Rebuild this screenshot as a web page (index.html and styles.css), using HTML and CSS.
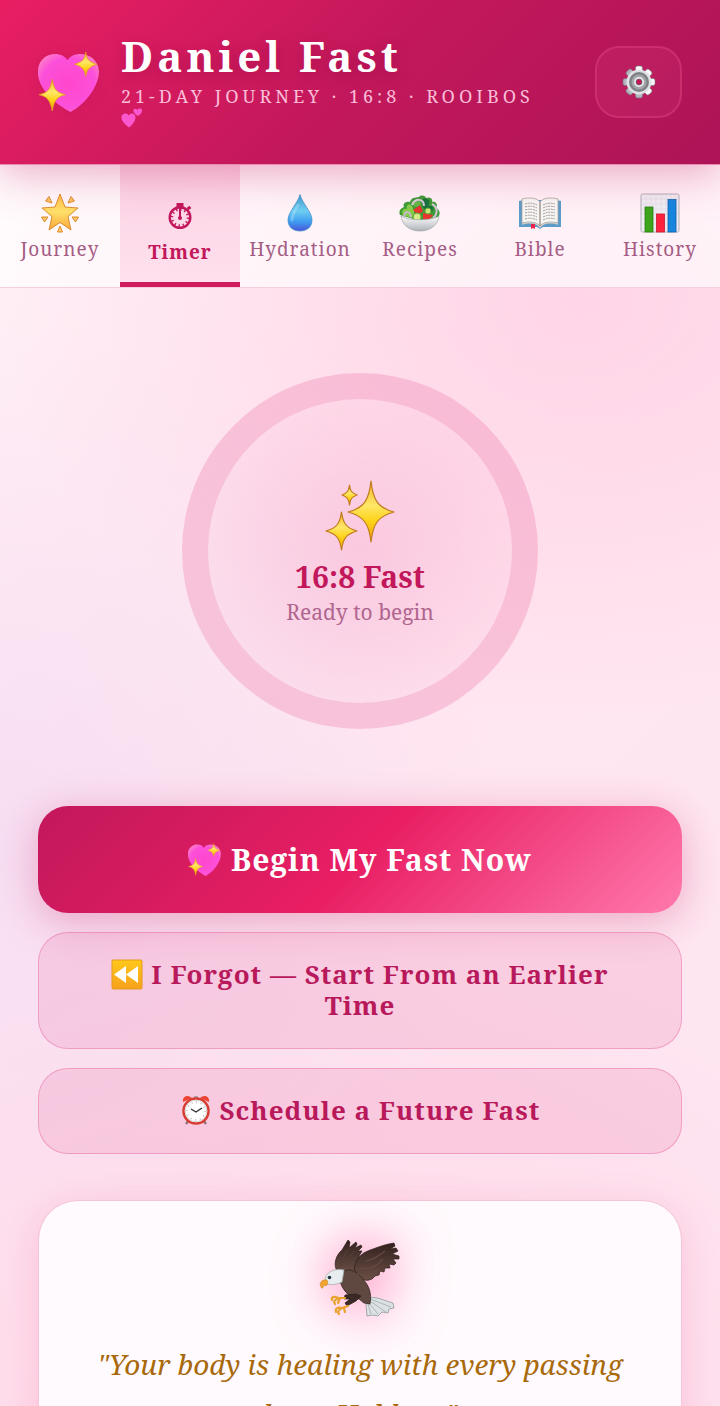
FILE: index.html
```html
<!DOCTYPE html>
<html lang="en">
  <head>
    <meta charset="UTF-8" />
    <meta name="viewport" content="width=device-width, initial-scale=1.0" />
    <title>Daniel Fast</title>
    <link rel="stylesheet" href="styles.css">
  </head>
  <body>
    <!-- shared gradients and the sparkling heart -->
    <svg class="defs" width="0" height="0" aria-hidden="true">
      <defs>
        <radialGradient id="heartFill" cx="0.5" cy="0.5" r="0.62">
          <stop offset="0" stop-color="#ff46cc" />
          <stop offset="0.7" stop-color="#fc50da" />
          <stop offset="1" stop-color="#ff86c4" />
        </radialGradient>
        <linearGradient id="gold" x1="0" y1="0" x2="0" y2="1">
          <stop offset="0" stop-color="#f3b52a" />
          <stop offset="0.4" stop-color="#ffe768" />
          <stop offset="0.65" stop-color="#fdd31a" />
          <stop offset="1" stop-color="#ee9f0c" />
        </linearGradient>
        <linearGradient id="starFill" x1="0" y1="0" x2="0" y2="1">
          <stop offset="0" stop-color="#ffc04a" />
          <stop offset="0.5" stop-color="#ffe26a" />
          <stop offset="1" stop-color="#fba63a" />
        </linearGradient>
        <linearGradient id="dropFill" x1="0" y1="0" x2="0" y2="1">
          <stop offset="0" stop-color="#3a9fd0" />
          <stop offset="0.45" stop-color="#6fd0f4" />
          <stop offset="0.75" stop-color="#3f9cf0" />
          <stop offset="1" stop-color="#4a55d8" />
        </linearGradient>
        <linearGradient id="wingFill" x1="0" y1="0" x2="0" y2="1">
          <stop offset="0" stop-color="#33211f" />
          <stop offset="1" stop-color="#6b4f45" />
        </linearGradient>
        <linearGradient id="silver" x1="0" y1="0" x2="0" y2="1">
          <stop offset="0" stop-color="#ffffff" />
          <stop offset="1" stop-color="#aeb2b8" />
        </linearGradient>
        <linearGradient id="rewindFill" x1="0" y1="0" x2="0" y2="1">
          <stop offset="0" stop-color="#ffc81a" />
          <stop offset="1" stop-color="#f7a11c" />
        </linearGradient>
      </defs>
      <symbol id="heart" viewBox="3 0 62 62">
        <path d="M32 9 C26 -1 5 1 3 18 C1 36 20 52 35 60 C47 54 62 38 63 21 C63 2 39 -2 32 9Z" fill="url(#heartFill)" />
        <path d="M50 1 C51 9 54 11 61 13 C54 15 51 18 50 25 C49 18 46 15 39 13 C46 11 49 9 50 1Z" fill="url(#gold)" stroke="#e39a22" stroke-width="0.800" />
        <path d="M17 28 C19 39 22 41 30 43 C22 45 19 48 17 59 C15 48 12 45 4 43 C12 41 15 39 17 28Z" fill="url(#gold)" stroke="#e39a22" stroke-width="0.800" />
      </symbol>
    </svg>

    <header class="header">
      <svg class="logo" aria-hidden="true"><use href="#heart" /></svg>
      <div class="brand">
        <h1>Daniel Fast</h1>
        <p>
          21-Day Journey · 16:8 · Rooibos
          <svg class="mini-hearts" viewBox="0 0 22 20" aria-hidden="true">
            <path d="M8 7.500 C6 4 0 5 0.500 10 C1 14 5 17 8 19.500 C11 17 14 14 14.500 10 C15 5 9 4 8 7.500Z" fill="#fb58cf" />
            <path d="M16.500 2 C15 0 12 0.500 12.500 3 C13 5.500 15 6.500 17 8 C19 6.500 21 5 21 2.500 C21 0 17.500 0 16.500 2Z" fill="#fb58cf" />
          </svg>
        </p>
      </div>
      <button class="settings" aria-label="Settings">
        <svg viewBox="0 0 34 34" aria-hidden="true">
          <g fill="url(#silver)" stroke="#74777c" stroke-width="0.600">
            <rect x="13.500" y="1" width="7" height="32" rx="2" />
            <rect x="13.500" y="1" width="7" height="32" rx="2" transform="rotate(45 17 17)" />
            <rect x="13.500" y="1" width="7" height="32" rx="2" transform="rotate(90 17 17)" />
            <rect x="13.500" y="1" width="7" height="32" rx="2" transform="rotate(135 17 17)" />
          </g>
          <circle cx="17" cy="17" r="12.500" fill="#dfe1e4" />
          <circle cx="17" cy="17" r="10" fill="#7e8287" />
          <circle cx="17" cy="17" r="7.500" fill="#a3a6aa" />
          <circle cx="17" cy="17" r="5" fill="#eceef0" />
          <circle cx="17" cy="17" r="3" fill="#c2185b" stroke="#666" stroke-width="0.800" />
        </svg>
      </button>
    </header>

    <nav class="tabs">
      <a class="tab" href="#journey">
        <svg viewBox="0 0 40 40" aria-hidden="true">
          <g stroke="#d98224" stroke-width="0.900" stroke-linejoin="round">
            <path d="M20 1 L25 14 L38 15 L28 23.500 L31 37 L20 29.500 L9 37 L12 23.500 L2 15 L15 14Z" fill="url(#starFill)" />
            <path d="M9 3.500 L12 10 L5.500 8Z M31 3.500 L28 10 L34.500 8Z M1.500 24 L8 24 L4.500 29Z M38.500 24 L32 24 L35.500 29Z M20 33 L22.500 39 L17.500 39Z" fill="#ffc766" />
          </g>
        </svg>
        <span>Journey</span>
      </a>
      <a class="tab active" href="#timer">
        <svg class="small" viewBox="0 0 26 30" aria-hidden="true">
          <rect x="9.500" y="2" width="7" height="4" fill="#c2185b" />
          <path d="M20.500 8 L23.500 6" stroke="#c2185b" stroke-width="3" />
          <circle cx="13" cy="16.500" r="10.300" fill="none" stroke="#c2185b" stroke-width="2.400" />
          <circle cx="13" cy="16.500" r="8" fill="none" stroke="#c2185b" stroke-width="2.400" stroke-dasharray="1.400 2.789" />
          <path d="M13 4 V16.500" stroke="#c2185b" stroke-width="2" />
          <circle cx="13" cy="17" r="2" fill="#c2185b" />
        </svg>
        <span>Timer</span>
      </a>
      <a class="tab" href="#hydration">
        <svg viewBox="0 0 40 40" aria-hidden="true">
          <path d="M20 1.500 C22 10 32 19 32 27 C32 34 27 38 20 38 C13 38 8 34 8 27 C8 19 18 10 20 1.500Z" fill="url(#dropFill)" stroke="#3388c8" stroke-width="0.700" />
          <path d="M18 12 C15 18 12 22 12 27" fill="none" stroke="#b5ecff" stroke-width="2.500" stroke-linecap="round" opacity="0.400" />
        </svg>
        <span>Hydration</span>
      </a>
      <a class="tab" href="#recipes">
        <svg class="wide" viewBox="0 0 42 40" aria-hidden="true">
          <path d="M1 22 C-1 17 3 15 5 14 C3 9 9 8 11 9 C13 3 18 5 20 4 C22 1 27 3 27 5 C32 3 34 7 33 9 C38 8 39 13 37 15 C42 17 41 22 39 24 L21 28Z" fill="#3f9d38" />
          <path d="M4 22 C1 17 7 14 8 17 C6 9 14 11 14 16 C17 17 14 22 13 25Z" fill="#86cf4a" />
          <path d="M23 7 C28 3 33 8 29 13 C35 11 36 18 31 20 L24 15Z" fill="#17743c" />
          <path d="M13 9 C17 4 24 8 21 13 C17 15 13 13 13 9Z" fill="#62b948" />
          <path d="M13 12 C16 5 25 5 25 13" fill="none" stroke="#d8cbdc" stroke-width="2" />
          <path d="M33 11 C39 14 39 21 34 25" fill="none" stroke="#d5c7dc" stroke-width="2" />
          <path d="M5 24 C6 17 11 18 12 24" fill="none" stroke="#c9bad0" stroke-width="2" />
          <path d="M14 17 L21 12 L24 18 L19 22Z M24 20 L34 22 L30 27 L24 26Z" fill="#e8352e" />
          <circle cx="18" cy="24" r="4" fill="#d5ec8b" stroke="#68a838" />
          <circle cx="29" cy="18" r="3" fill="#ccea7b" stroke="#68a838" />
          <path d="M2 23 C7 28 34 28 40 23 C39 31 33 38 21 38 C9 38 3 31 2 23Z" fill="url(#silver)" stroke="#9b9da0" stroke-width="0.600" />
        </svg>
        <span>Recipes</span>
      </a>
      <a class="tab" href="#bible">
        <svg class="wide" viewBox="0 0 42 40" aria-hidden="true">
          <path d="M0 8 L5 7 H37 L42 8 V34 H24 L21 36 L18 34 H0Z" fill="#5b9cc9" />
          <path d="M3 6 C11 4 18 5 21 9 C24 5 31 4 39 6 V30 C31 28 24 29 21 33 C18 29 11 28 3 30Z" fill="#f8f7f5" stroke="#a9a39d" stroke-width="0.800" />
          <path d="M3 31 C11 29 18 30 21 34 C24 30 31 29 39 31" fill="none" stroke="#cfc8c3" stroke-width="1.500" />
          <path d="M21 9 V33" stroke="#8d8178" stroke-width="1.200" />
          <path d="M6 11 Q12 9 18 12 M6 14 Q12 12 18 15 M6 17 Q12 15 18 18 M6 20 Q12 18 18 21 M6 23 Q12 21 18 24 M6 26 Q12 24 18 27 M24 12 Q30 9 36 11 M24 15 Q30 12 36 14 M24 18 Q30 15 36 17 M24 21 Q30 18 36 20 M24 24 Q30 21 36 23 M24 27 Q30 24 36 26" fill="none" stroke="#99938e" stroke-width="0.900" stroke-dasharray="2 0.700" />
          <path d="M12 31 H16 V36 L14 35 L12 36Z" fill="#ed234d" />
        </svg>
        <span>Bible</span>
      </a>
      <a class="tab" href="#history">
        <svg viewBox="0 0 40 40" aria-hidden="true">
          <rect x="1" y="1" width="38" height="38" rx="1.500" fill="#f0edf4" stroke="#b0adb6" />
          <path d="M6 2 V38 M11 2 V38 M16 2 V38 M21 2 V38 M26 2 V38 M31 2 V38 M36 2 V38 M2 6 H38 M2 11 H38 M2 16 H38 M2 21 H38 M2 26 H38 M2 31 H38 M2 36 H38" stroke="#dcd9e2" stroke-width="0.500" />
          <rect x="5" y="14" width="8" height="25" fill="#3da51c" stroke="#2a7d12" stroke-width="0.800" />
          <rect x="16.500" y="21" width="8" height="18" fill="#ff2340" stroke="#ce1733" stroke-width="0.800" />
          <rect x="28" y="6.500" width="8" height="32.500" fill="#1686df" stroke="#0d60ae" stroke-width="0.800" />
        </svg>
        <span>History</span>
      </a>
    </nav>

    <main class="content">
      <section class="ring">
        <svg class="sparkles" viewBox="0 0 72 72" aria-hidden="true">
          <g fill="url(#gold)" stroke="#c07a1c" stroke-width="1.200" stroke-linejoin="round">
            <path d="M47 2 C49 21 54 29 70 33 C54 37 49 45 47 63 C45 45 40 37 24 33 C40 29 45 21 47 2Z" />
            <path d="M17.500 33 C19 44 22 49 33 52 C22 55 19 60 17.500 71 C16 60 13 55 2 52 C13 49 16 44 17.500 33Z" />
            <path d="M25.500 6 C26 12 28 14 33 16 C28 18 26 20 25.500 26 C25 20 23 18 18 16 C23 14 25 12 25.500 6Z" />
          </g>
        </svg>
        <h2>16:8 Fast</h2>
        <p>Ready to begin</p>
      </section>

      <div class="actions">
        <button class="btn btn-main">
          <svg class="heart-icon" aria-hidden="true"><use href="#heart" /></svg>
          Begin My Fast Now
        </button>
        <button class="btn btn-soft">
          <svg viewBox="0 0 32 32" aria-hidden="true">
            <rect x="1" y="2" width="30" height="29" rx="1" fill="url(#rewindFill)" stroke="#e5981e" />
            <path d="M3 16.500 L15 8 V25Z M15 16.500 L27 8 V25Z" fill="#fff" />
          </svg>
          I Forgot — Start From an Earlier Time
        </button>
        <button class="btn btn-soft">
          <svg viewBox="0 0 32 32" aria-hidden="true">
            <path d="M9 26 L6 30 M23 26 L26 30" stroke="#927477" stroke-width="2.500" />
            <path d="M3 8 C2 2 8 0 12 4Z M29 8 C30 2 24 0 20 4Z" fill="#ef4434" />
            <path d="M14 2 H18 V5 H14Z" fill="#a5a5a9" />
            <circle cx="16" cy="17" r="12.500" fill="#fff" stroke="#d83b30" stroke-width="2.500" />
            <circle cx="16" cy="17" r="10.800" fill="#fff" stroke="#c9c9c9" stroke-width="0.800" />
            <circle cx="16" cy="17" r="9" fill="none" stroke="#8a8a8a" stroke-width="1.300" stroke-dasharray="0.700 4.012" />
            <path d="M11 15 L16 18 L22 14" fill="none" stroke="#333" stroke-width="1.400" />
          </svg>
          Schedule a Future Fast
        </button>
      </div>

      <section class="card">
        <svg class="eagle" viewBox="0 0 80 80" aria-hidden="true">
          <path d="M50 59 C56 57 65 62 73 64 L74 69 L69 70 L68 74 L62 73 L58 77 L53 76 L47 77 L46 66Z" fill="#dce2e4" stroke="#92999d" stroke-width="0.800" />
          <path d="M50 60 L71 68 M50 62 L66 73 M49 64 L58 75 M48 65 L51 75" stroke="#a8b0b3" stroke-width="0.900" />
          <g stroke="#2a1c1a" stroke-width="0.700" stroke-linejoin="round">
            <path d="M17 32 C13 25 16 16 22 11 L28 1 L30 3 L29 9 L36 3 L37 5 L35 9 L41 6 L42 8 L38 12 L42 12 L39 17 L40 35 L28 35Z" fill="url(#wingFill)" />
            <path d="M34 30 C37 16 44 13 53 10 C61 7 67 5 74 4 L75 7 L70 10 L76 9 L78 12 L72 15 L79 17 L79 20 L73 20 L76 24 L74 26 L69 25 L70 29 L65 29 L64 33 L60 32 L59 36 L55 37 L52 40 C47 42 44 42 40 38Z" fill="url(#wingFill)" />
            <path d="M21 35 C28 27 36 32 43 40 C49 47 52 54 50 65 L44 64 L39 60 C29 60 20 48 20 40Z" fill="#5f483f" />
            <path d="M41 57 L36 62 L27 67 L25 64 L30 60 L24 60 L25 56 L36 55Z" fill="#3b2925" />
          </g>
          <path d="M37 34 C45 40 54 35 58 30 M41 29 C50 31 58 26 63 20 M45 22 C52 22 58 17 65 12" fill="none" stroke="#644a40" stroke-width="1.200" />
          <path d="M20 28 C22 20 25 15 29 10 M26 28 C28 21 31 16 34 12" fill="none" stroke="#594039" stroke-width="1" />
          <path d="M5 42 C5 33 14 29 24 31 L22 43 C16 46 10 46 7 45Z" fill="#e8edef" stroke="#a6acaf" stroke-width="0.800" />
          <path d="M7 41 C1 40 -1 45 1 48 C2 51 4 48 3 46 C7 48 9 45 7 41Z" fill="#f1a531" stroke="#c47c16" stroke-width="0.500" />
          <circle cx="9.500" cy="38.500" r="1.800" fill="#243845" />
          <path d="M25 59 H18 C14 57 11 58 12 61 M19 60 C15 60 13 62 15 65 M20 59 L18 64 M28 67 L22 69 C18 68 15 69 16 73 M23 69 C19 70 17 73 19 75 M24 69 L25 73" fill="none" stroke="#e9a32e" stroke-width="2.200" stroke-linecap="round" stroke-linejoin="round" />
        </svg>
        <blockquote>"Your body is healing with every passing hour. Hold on."</blockquote>
      </section>
    </main>
  </body>
</html>
```

FILE: styles.css
```css
* {
  box-sizing: border-box;
  margin: 0;
  padding: 0;
}

body {
  min-height: 100vh;
  color: #c2185b;
  font-family: "Noto Serif", "DejaVu Serif Condensed", "DejaVu Serif", serif;
  background:
    radial-gradient(ellipse 80% 420px at 80% 300px, rgba(255, 206, 227, 0.75), transparent),
    radial-gradient(ellipse 70% 520px at 0 840px, rgba(244, 218, 242, 0.7), transparent),
    radial-gradient(ellipse 100% 480px at 40% 1400px, rgba(255, 212, 230, 0.8), transparent),
    linear-gradient(135deg, #fff2f7 0%, #ffe6f0 50%, #fde6f2 100%);
}

body::-webkit-scrollbar {
  display: none;
}

.defs {
  position: absolute;
}

svg {
  flex: none;
}

/* header */
.header {
  position: relative;
  z-index: 2;
  display: flex;
  align-items: center;
  gap: 20px;
  padding: 33px 38px;
  border-bottom: 1px solid #e98ab4;
  background: linear-gradient(135deg, #e91e63 0%, #c2185b 50%, #ad1457 100%);
  box-shadow: 0 8px 40px rgba(194, 24, 91, 0.35);
}

.logo {
  width: 63px;
  height: 63px;
  filter: drop-shadow(0 2px 6px rgba(173, 20, 87, 0.25));
}

.brand {
  flex: 1;
  padding-right: 20px;
}

.brand h1 {
  color: #fff;
  font-size: 42px;
  line-height: 46px;
  letter-spacing: 4px;
  text-shadow: 0 4px 14px rgba(130, 0, 60, 0.4);
}

.brand p {
  margin-top: 6px;
  color: #fbbdd8;
  font-size: 18px;
  line-height: 23px;
  letter-spacing: 4px;
  text-transform: uppercase;
}

.mini-hearts {
  width: 22px;
  height: 20px;
  vertical-align: -2px;
}

.settings {
  display: flex;
  align-items: center;
  justify-content: center;
  width: 87px;
  height: 72px;
  border: 2px solid rgba(255, 90, 150, 0.25);
  border-radius: 24px;
  background: rgba(255, 110, 160, 0.1);
  cursor: pointer;
}

.settings svg {
  width: 34px;
  height: 34px;
}

/* tabs */
.tabs {
  display: grid;
  grid-template-columns: repeat(6, 1fr);
  border-bottom: 1px solid #f5cfe0;
  background: rgba(255, 255, 255, 0.65);
}

.tab {
  display: flex;
  flex-direction: column;
  align-items: center;
  padding: 28px 0 19px;
  border-bottom: 5px solid transparent;
  color: #a55d85;
  font-size: 19px;
  line-height: 28px;
  letter-spacing: 1px;
  text-decoration: none;
}

.tab svg {
  width: 40px;
  height: 40px;
  margin-bottom: 2px;
}

.tab svg.wide {
  width: 42px;
}

.tab svg.small {
  width: 26px;
  height: 30px;
  margin: 8px 0 7px;
}

.tab.active {
  padding-bottom: 16px;
  border-bottom-color: #d01c5f;
  background: linear-gradient(rgba(244, 143, 187, 0.35), rgba(255, 183, 213, 0.35));
  color: #c2185b;
  font-weight: bold;
}

/* timer */
.content {
  padding: 85px 38px 0;
}

.ring {
  display: flex;
  flex-direction: column;
  align-items: center;
  justify-content: center;
  width: 356px;
  height: 356px;
  margin: 0 auto 77px;
  padding-top: 4px;
  border: 26px solid rgba(233, 90, 150, 0.25);
  border-radius: 50%;
  background: radial-gradient(circle, rgba(244, 160, 200, 0.38), rgba(244, 160, 200, 0.12) 70%);
  background-clip: padding-box;
}

.sparkles {
  width: 72px;
  height: 72px;
}

.ring h2 {
  margin-top: 6px;
  font-size: 30px;
  line-height: 40px;
}

.ring p {
  color: #b0668f;
  font-size: 21px;
  line-height: 30px;
}

/* buttons */
.actions {
  display: flex;
  flex-direction: column;
  gap: 19px;
}

.btn {
  border: 0;
  border-radius: 30px;
  font-family: inherit;
  font-weight: bold;
  letter-spacing: 1px;
  cursor: pointer;
}

.btn svg {
  width: 32px;
  height: 32px;
  vertical-align: -6px;
}

.btn .heart-icon {
  width: 34px;
  height: 34px;
  vertical-align: -6px;
}

.btn-main {
  padding: 34px 38px;
  color: #fff;
  font-size: 30px;
  line-height: 39px;
  background: linear-gradient(135deg, #c2185b 0%, #e91e63 50%, #ff79ad 100%);
  box-shadow: 0 8px 40px rgba(194, 24, 91, 0.3);
}

.btn-soft {
  padding: 25px 38px 27px;
  border: 1px solid rgba(225, 90, 150, 0.4);
  color: #b8195b;
  font-size: 26px;
  line-height: 31px;
  background: rgba(233, 90, 150, 0.16);
}

/* quote card */
.card {
  margin-top: 46px;
  padding: 38px;
  border: 1px solid #f6c3d9;
  border-radius: 40px;
  background: #fffafd;
  box-shadow: 0 8px 38px rgba(233, 30, 99, 0.14);
  text-align: center;
}

.eagle {
  display: block;
  width: 80px;
  height: 80px;
  margin: 0 auto 20px;
  overflow: visible;
  filter: drop-shadow(0 0 26px rgba(255, 64, 145, 0.65));
}

.card blockquote {
  color: #a8690b;
  font-size: 28px;
  font-style: italic;
  line-height: 50px;
}
```
